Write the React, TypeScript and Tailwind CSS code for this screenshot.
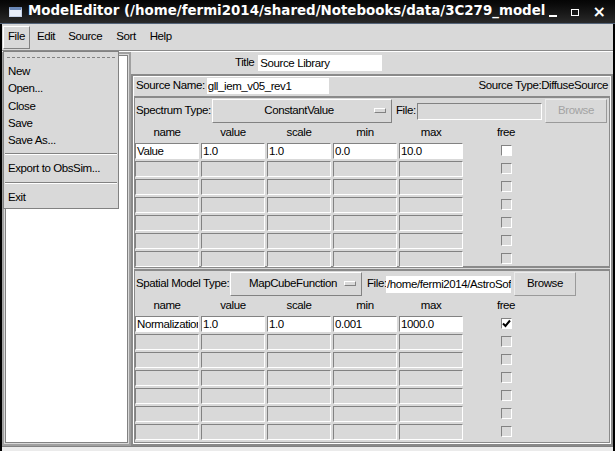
import React from 'react';

const spectrumRows = [
    { name: 'Value', value: '1.0', scale: '1.0', min: '0.0', max: '10.0', free: false },
];
const spatialRows = [
    { name: 'Normalization', value: '1.0', scale: '1.0', min: '0.001', max: '1000.0', free: true },
];

interface Row {
    name: string;
    value: string;
    scale: string;
    min: string;
    max: string;
    free: boolean;
}

const Cell: React.FC<{ text?: string; active: boolean }> = ({ text, active }) => (
    <div
        className={
            'w-[64px] h-[16px] shrink-0 border-t border-l border-t-[#828282] border-l-[#828282] border-b border-r border-b-white border-r-white overflow-hidden whitespace-nowrap pl-[1px] leading-[14px] ' +
            (active ? 'bg-white' : 'bg-[#d9d9d9]')
        }
    >
        {text}
    </div>
);

const Check: React.FC<{ active: boolean; checked: boolean }> = ({ active, checked }) => (
    <div className="w-[82px] shrink-0 flex justify-center">
        <div
            className={
                'w-[11px] h-[11px] mt-[2px] border-t border-l border-t-[#828282] border-l-[#828282] border-b border-r border-b-white border-r-white flex items-center justify-center ' +
                (active ? 'bg-white' : 'bg-[#d9d9d9]')
            }
        >
            {checked && (
                <svg width="9" height="9" viewBox="0 0 9 9">
                    <path d="M1 4.5 L3.5 7 L8 1.5" stroke="#000" strokeWidth="2" fill="none" />
                </svg>
            )}
        </div>
    </div>
);

const ParamTable: React.FC<{ rows: Row[] }> = ({ rows }) => {
    const all: (Row | null)[] = [...rows];
    while (all.length < 7) all.push(null);
    return (
        <div className="flex flex-col">
            <div className="flex gap-[2px] h-[18px] items-center">
                {['name', 'value', 'scale', 'min', 'max'].map((h) => (
                    <div key={h} className="w-[64px] shrink-0 text-center">{h}</div>
                ))}
                <div className="w-[82px] shrink-0 text-center">free</div>
            </div>
            <div className="flex flex-col gap-[2px] mt-[1px]">
                {all.map((r, i) => (
                    <div key={i} className="flex gap-[2px]">
                        <Cell text={r?.name} active={!!r} />
                        <Cell text={r?.value} active={!!r} />
                        <Cell text={r?.scale} active={!!r} />
                        <Cell text={r?.min} active={!!r} />
                        <Cell text={r?.max} active={!!r} />
                        <Check active={!!r} checked={!!r?.free} />
                    </div>
                ))}
            </div>
        </div>
    );
};

const MenuButton: React.FC<{ label: string; width: string }> = ({ label, width }) => (
    <div className={`${width} shrink-0 h-[24px] flex items-center justify-center relative border border-t-white border-l-white border-b-[#828282] border-r-[#828282]`}>
        <span className="-ml-[6px]">{label}</span>
        <div className="absolute right-[5px] top-[8px] w-[12px] h-[5px] border border-t-white border-l-white border-b-[#828282] border-r-[#828282]" />
    </div>
);

const RaisedButton: React.FC<{ label: string; disabled?: boolean }> = ({ label, disabled }) => (
    <div
        className={
            'w-[62px] shrink-0 h-[24px] flex items-center justify-center border border-t-[#ececec] border-l-[#ececec] border-b-[#9a9a9a] border-r-[#9a9a9a] ' +
            (disabled ? 'text-[#a3a3a3]' : 'text-black')
        }
    >
        {label}
    </div>
);

const App: React.FC = () => {
    return (
        <div className="w-[615px] h-[451px] bg-[#ebebeb] flex flex-col relative overflow-hidden text-[11.5px] tracking-[-0.4px] text-black font-['Liberation_Sans',sans-serif]">
            {/* title bar */}
            <div className="h-[24px] shrink-0 bg-gradient-to-b from-[#050505] to-[#2a2a2a] border-b border-[#55657a] flex items-center text-white font-['DejaVu_Sans',sans-serif] font-bold tracking-normal">
                <div className="ml-[9px] w-[13px] h-[10px] bg-[#e8eef8] border-t-[3px] border-[#6a88b8] border-x border-b border-x-[#c8d4e8] border-b-[#c8d4e8]" />
                <div className="ml-[6px] text-[13.4px] whitespace-nowrap">ModelEditor (/home/fermi2014/shared/Notebooks/data/3C279_model</div>
                <div className="ml-auto flex items-center gap-[14px] mr-[9px] text-[13px]">
                    <span className="w-[8px] h-[2px] bg-white mt-[8px]" />
                    <span className="w-[8px] h-[7px] border-[1.5px] border-white mt-[2px]" />
                    <span className="text-[16px] leading-none">×</span>
                </div>
            </div>

            <div className="flex-1 flex flex-col bg-[#d9d9d9] border-x-2 border-x-black min-h-0">
                {/* menubar */}
                <div className="h-[27px] shrink-0 flex items-center pl-[1px] border-b border-b-[#8a8a8a]">
                    <div className="h-[23px] px-[4px] flex items-center border border-t-white border-l-white border-b-[#828282] border-r-[#828282] bg-[#d9d9d9]">File</div>
                    <div className="ml-[7px]">Edit</div>
                    <div className="ml-[13px]">Source</div>
                    <div className="ml-[14px]">Sort</div>
                    <div className="ml-[14px]">Help</div>
                </div>

                {/* body */}
                <div className="flex-1 flex border-t border-t-white border-b border-b-[#828282] min-h-0">
                    {/* list */}
                    <div className="w-[129px] shrink-0 border-[2px] border-[#a0a0a0] flex p-[1px] bg-[#d9d9d9]">
                        <div className="flex-1 bg-white border border-[#828282]" />
                    </div>

                    {/* right */}
                    <div className="flex-1 min-w-0 flex flex-col overflow-hidden">
                        <div className="h-[22px] shrink-0 flex items-center pl-[104px] gap-[4px]">
                            <span>Title</span>
                            <div className="w-[124px] h-[16px] bg-white pl-[2px] leading-[16px]">Source Library</div>
                        </div>
                        <div className="flex-1 flex flex-col border-[2px] border-[#8a8a8a] outline outline-1 outline-white -outline-offset-3">
                            <div className="h-[20px] shrink-0 flex items-center pl-[3px] pr-[3px]">
                                <span>Source Name:</span>
                                <div className="ml-[2px] w-[122px] h-[16px] bg-white pl-[1px] leading-[16px]">gll_iem_v05_rev1</div>
                                <span className="ml-auto whitespace-nowrap">Source Type:DiffuseSource</span>
                            </div>

                            {/* spectrum */}
                            <div className="h-[172px] shrink-0 flex flex-col border-[2px] border-[#8a8a8a]">
                                <div className="h-[26px] shrink-0 flex items-center">
                                    <span className="w-[77px] shrink-0 pl-[1px] whitespace-nowrap">Spectrum Type:</span>
                                    <MenuButton label="ConstantValue" width="w-[180px]" />
                                    <span className="w-[25px] shrink-0 pl-[4px]">File:</span>
                                    <div className="w-[125px] shrink-0 h-[17px] border border-t-[#828282] border-l-[#828282] border-b-white border-r-white" />
                                    <div className="ml-[3px]"><RaisedButton label="Browse" disabled /></div>
                                </div>
                                <ParamTable rows={spectrumRows} />
                            </div>

                            {/* spatial */}
                            <div className="mt-[1px] flex-1 flex flex-col border-[2px] border-[#8a8a8a]">
                                <div className="h-[26px] shrink-0 flex items-center">
                                    <span className="w-[95px] shrink-0 pl-[1px] whitespace-nowrap">Spatial Model Type:</span>
                                    <MenuButton label="MapCubeFunction" width="w-[132px]" />
                                    <span className="w-[24px] shrink-0 pl-[5px]">File:</span>
                                    <div className="w-[125px] shrink-0 h-[17px] bg-white pl-[1px] leading-[16px] whitespace-nowrap overflow-hidden">/home/fermi2014/AstroSoft</div>
                                    <div className="ml-[3px]"><RaisedButton label="Browse" /></div>
                                </div>
                                <ParamTable rows={spatialRows} />
                            </div>
                        </div>
                    </div>
                </div>
                <div className="h-[4px] shrink-0 bg-[#ebebeb]" />
            </div>

            {/* File menu */}
            <div className="absolute left-[3px] top-[51px] w-[116px] h-[158px] bg-[#d9d9d9] border border-[#828282] flex flex-col">
                <div className="mt-[5px] mx-[3px] border-t border-dashed border-[#828282]" />
                <div className="flex flex-col pl-[4px] mt-[5px] leading-[17.3px]">
                    <span>New</span>
                    <span>Open...</span>
                    <span>Close</span>
                    <span>Save</span>
                    <span>Save As...</span>
                </div>
                <div className="mx-[1px] mt-[4px] mb-[5px] border-t border-t-[#828282] border-b border-b-white" />
                <span className="pl-[4px] leading-[17px]">Export to ObsSim...</span>
                <div className="mx-[1px] mt-[5px] mb-[5px] border-t border-t-[#828282] border-b border-b-white" />
                <span className="pl-[4px] leading-[17px]">Exit</span>
            </div>
        </div>
    );
};

export default App;
